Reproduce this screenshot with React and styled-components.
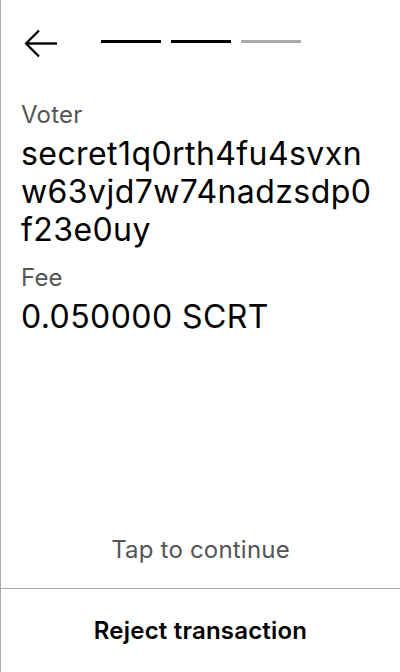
import React from "react";
import styled, { createGlobalStyle } from "styled-components";

const GlobalStyle = createGlobalStyle`
  html, body { margin: 0; padding: 0; background: #fff; }
  body { font-family: Inter, "Noto Sans", sans-serif; -webkit-font-smoothing: antialiased; }
  * { box-sizing: border-box; }
`;

const Screen = styled.div`
  width: 400px;
  height: 672px;
  display: flex;
  flex-direction: column;
  border-left: 1px solid #aaaaaa;
  background: #ffffff;
  color: #000000;
  font-family: Inter, "Noto Sans", sans-serif;
`;

const Header = styled.div`
  display: flex;
  align-items: flex-start;
  height: 99px;
  padding: 29px 0 0 23px;
`;

const BackButton = styled.button`
  display: flex;
  padding: 0;
  border: 0;
  background: none;
  cursor: pointer;
`;

const Progress = styled.div`
  display: flex;
  gap: 10px;
  margin: 11px 0 0 43px;
`;

const Bar = styled.div`
  width: 60px;
  height: 3px;
  background: ${(p) => (p.$active ? "#000000" : "#aaaaaa")};
`;

const Content = styled.div`
  display: flex;
  flex-direction: column;
  gap: 13px;
  padding: 0 24px 0 20px;
`;

const Field = styled.div`
  display: flex;
  flex-direction: column;
  gap: 4px;
`;

const Label = styled.div`
  font-size: 24px;
  line-height: 32px;
  letter-spacing: 0.2px;
  color: #555555;
`;

const Value = styled.div`
  font-size: 32px;
  line-height: 38px;
  letter-spacing: 0.42px;
  color: #000000;
  word-break: break-all;
`;

const TapArea = styled.div`
  flex: 1;
  display: flex;
  align-items: flex-end;
  justify-content: center;
  padding-bottom: 22px;
`;

const TapText = styled.div`
  font-size: 24px;
  line-height: 32px;
  letter-spacing: 0.2px;
  color: #555555;
`;

const Footer = styled.button`
  height: 84px;
  border: 0;
  border-top: 1px solid #aaaaaa;
  background: #ffffff;
  display: flex;
  align-items: center;
  justify-content: center;
  font-family: Inter, "Noto Sans", sans-serif;
  font-size: 24px;
  font-weight: 600;
  line-height: 32px;
  letter-spacing: 0.2px;
  color: #000000;
  padding: 0;
  cursor: pointer;
`;

const BackArrow = () => (
  <svg width="34" height="29" viewBox="0 0 34 29" fill="none">
    <path d="M15 1.5 L2 14.5 L15 27.5" stroke="#000" strokeWidth="2.2" strokeLinecap="butt" strokeLinejoin="miter" />
    <path d="M2 14.5 H33" stroke="#000" strokeWidth="2.4" />
  </svg>
);

export default function App() {
  const fields = [
    { label: "Voter", value: "secret1q0rth4fu4svxnw63vjd7w74nadzsdp0f23e0uy" },
    { label: "Fee", value: "0.050000 SCRT" },
  ];
  return (
    <>
      <GlobalStyle />
      <Screen>
        <Header>
          <BackButton aria-label="Back">
            <BackArrow />
          </BackButton>
          <Progress>
            <Bar $active />
            <Bar $active />
            <Bar />
          </Progress>
        </Header>
        <Content>
          {fields.map((f) => (
            <Field key={f.label}>
              <Label>{f.label}</Label>
              <Value>{f.value}</Value>
            </Field>
          ))}
        </Content>
        <TapArea>
          <TapText>Tap to continue</TapText>
        </TapArea>
        <Footer>Reject transaction</Footer>
      </Screen>
    </>
  );
}
